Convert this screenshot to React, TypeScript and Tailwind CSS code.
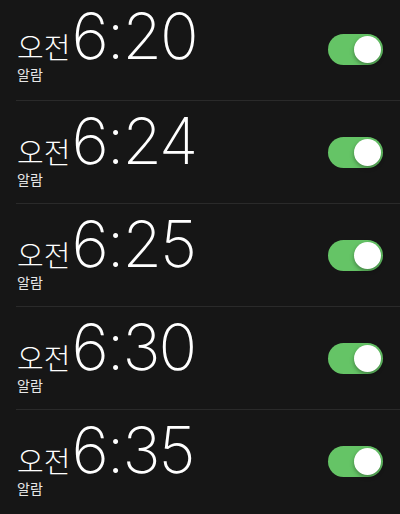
import React from 'react'

const alarms = ['6:20', '6:24', '6:25', '6:30', '6:35']

const Toggle = () => (
    <div className="relative w-[55px] h-[31px] rounded-full bg-[#65c466]">
        <div className="absolute right-[2px] top-[2px] w-[27px] h-[27px] rounded-full bg-white shadow-[0_2px_4px_rgba(0,0,0,0.35)]" />
    </div>
)

const App = () => {
    return (
        <div className="w-[400px] h-[514px] overflow-hidden bg-[#161616] text-white font-['Noto_Sans_CJK_KR',sans-serif]">
            {alarms.map((time, i) => (
                <div key={time} className={i === 0 ? '' : 'ml-4 border-t border-[#2a2a2a]'}>
                    <div
                        className={`flex justify-between pr-[17px] ${
                            i === 0 ? 'items-end h-[100px] pl-[17px] pb-[17px]' : 'items-center h-[102px] pl-[1px]'
                        }`}
                    >
                        <div className={`flex flex-col ${i === 0 ? '' : 'pb-[3px]'}`}>
                            <div className="flex items-baseline">
                                <span className="text-[29px] font-light leading-[26px]">오전</span>
                                <span className="ml-[1px] text-[64px] font-extralight font-['Inter',sans-serif] tracking-[-2px] leading-[56px]">
                                    {time}
                                </span>
                            </div>
                            <span className="mt-[1px] text-[14px] leading-[18px] text-[#e8e8e8]">알람</span>
                        </div>
                        <div className={i === 0 ? 'mb-[18px]' : ''}>
                            <Toggle />
                        </div>
                    </div>
                </div>
            ))}
        </div>
    )
}

export default App
